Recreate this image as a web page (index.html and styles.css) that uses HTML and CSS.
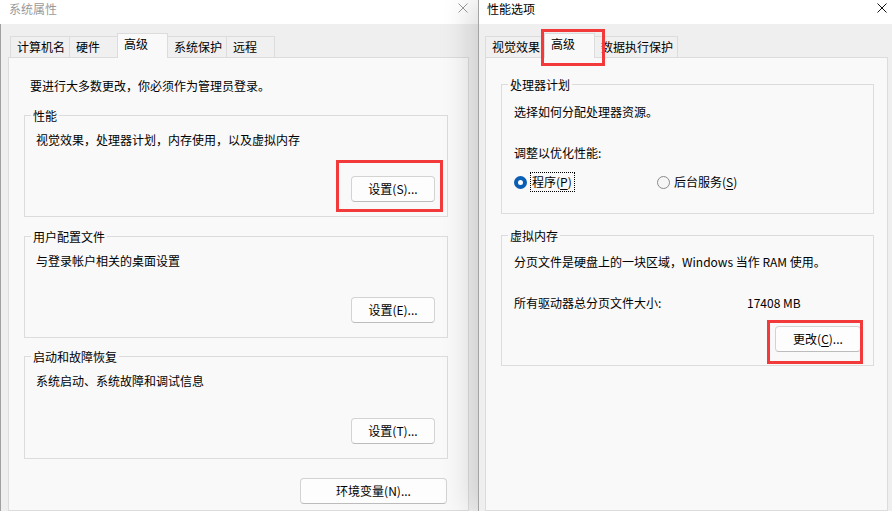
FILE: index.html
```html
<!DOCTYPE html>
<html lang="zh-CN">
<head>
  <meta charset="UTF-8">
  <title>系统属性 - 性能选项</title>
  <link rel="stylesheet" href="styles.css">
</head>
<body>
  <div class="desk">

    <!-- 系统属性 (inactive, behind) -->
    <div class="win win-back">
      <div class="titlebar">
        <span class="title">系统属性</span>
        <svg class="close" width="10" height="10" viewBox="0 0 10 10">
          <path d="M0.5 0.5 L9.5 9.5 M9.5 0.5 L0.5 9.5" stroke="currentColor" stroke-width="1" fill="none"/>
        </svg>
      </div>
      <div class="win-body">
        <div class="tabs">
          <div class="tab">计算机名</div>
          <div class="tab">硬件</div>
          <div class="tab active">高级</div>
          <div class="tab">系统保护</div>
          <div class="tab">远程</div>
        </div>
        <div class="panel">
          <p class="note">要进行大多数更改，你必须作为管理员登录。</p>

          <div class="group">
            <span class="group-title">性能</span>
            <p class="group-text">视觉效果，处理器计划，内存使用，以及虚拟内存</p>
            <button class="btn mark mark-perf">设置(S)...</button>
          </div>

          <div class="group group-profile">
            <span class="group-title">用户配置文件</span>
            <p class="group-text">与登录帐户相关的桌面设置</p>
            <button class="btn">设置(E)...</button>
          </div>

          <div class="group group-startup">
            <span class="group-title">启动和故障恢复</span>
            <p class="group-text">系统启动、系统故障和调试信息</p>
            <button class="btn">设置(T)...</button>
          </div>

          <button class="btn btn-env">环境变量(N)...</button>
        </div>
      </div>
    </div>

    <!-- 性能选项 (active, front) -->
    <div class="win win-front">
      <div class="titlebar">
        <span class="title">性能选项</span>
        <svg class="close" width="10" height="10" viewBox="0 0 10 10">
          <path d="M0.5 0.5 L9.5 9.5 M9.5 0.5 L0.5 9.5" stroke="currentColor" stroke-width="1" fill="none"/>
        </svg>
      </div>
      <div class="win-body">
        <div class="tabs">
          <div class="tab">视觉效果</div>
          <div class="tab active mark mark-tab">高级</div>
          <div class="tab">数据执行保护</div>
        </div>
        <div class="panel">
          <div class="group group-cpu">
            <span class="group-title">处理器计划</span>
            <p class="cpu-text">选择如何分配处理器资源。</p>
            <p class="cpu-adjust">调整以优化性能:</p>
            <div class="radio-row">
              <div class="opt">
                <span class="radio checked"></span>
                <span class="focus">程序(<u>P</u>)</span>
              </div>
              <div class="opt">
                <span class="radio"></span>
                <span>后台服务(<u>S</u>)</span>
              </div>
            </div>
          </div>

          <div class="group group-vm">
            <span class="group-title">虚拟内存</span>
            <p class="vm-text">分页文件是硬盘上的一块区域，Windows 当作 RAM 使用。</p>
            <div class="size-row">
              <span class="size-label">所有驱动器总分页文件大小:</span>
              <span>17408 MB</span>
            </div>
            <button class="btn btn-change mark mark-change">更改(<u>C</u>)...</button>
          </div>
        </div>
      </div>
    </div>

  </div>
</body>
</html>
```

FILE: styles.css
```css
*,
*::before,
*::after {
  box-sizing: border-box;
}

html, body {
  margin: 0;
  padding: 0;
  overflow: hidden;
}

body {
  font-family: "Noto Sans CJK SC", "Liberation Sans", sans-serif;
  font-size: 12px;
  line-height: 16px;
  color: #000;
  background-color: #efefef;
}

p {
  margin: 0;
}

.desk {
  display: flex;
  width: 892px;
  height: 511px;
}

.win {
  display: flex;
  flex-direction: column;
  background-color: #efefef;
}

.win-back {
  width: 478px;
}

.win-front {
  width: 414px;
  position: relative;
  z-index: 1;
  border-left: 1px solid #a3a3a3;
  box-shadow: -10px 0 26px rgba(0, 0, 0, 0.13);
}

/* title bar */
.titlebar {
  height: 24px;
  background-color: #fff;
  display: flex;
  justify-content: space-between;
  align-items: flex-start;
  padding: 1px 10px 0 9px;
}

.win-front .titlebar {
  padding: 1px 5px 0 8px;
}

.title {
  line-height: 16px;
}

.win-back .title,
.win-back .close {
  color: #9a9a9a;
}

.close {
  margin-top: 2px;
  color: #111;
}

.win-body {
  flex: 1;
  display: flex;
  flex-direction: column;
  padding: 9px 9px 0 7px;
}

.win-back .win-body {
  border-left: 1px solid #a0a0a0;
}

.win-front .win-body {
  padding: 9px 4px 0 6px;
}

/* tabs */
.tabs {
  display: flex;
  align-items: flex-end;
  height: 24px;
  padding-left: 2px;
}

.win-front .tabs {
  padding-left: 0;
}

.tab {
  height: 21px;
  min-width: 49px;
  padding: 0 4px 0 6px;
  line-height: 20px;
  border: 1px solid #dcdcdc;
  border-bottom: none;
  margin-right: -1px;
  background-color: #f0f0f0;
  white-space: nowrap;
}

.tab.active {
  height: 25px;
  min-width: 51px;
  margin-bottom: -1px;
  padding-top: 0;
  line-height: 20px;
  background-color: #f9f9f9;
  position: relative;
  z-index: 2;
}

.panel {
  flex: 1;
  display: flex;
  flex-direction: column;
  border: 1px solid #dcdcdc;
  background-color: #f9f9f9;
  padding: 20px 20px 0 15px;
}

.win-front .panel {
  padding: 26px 13px 0 15px;
}

.note {
  margin-left: 6px;
}

/* group boxes */
.group {
  display: flex;
  flex-direction: column;
  height: 102px;
  margin-top: 21px;
  border: 1px solid #dcdcdc;
  padding: 0 12px 14px 11px;
}

.group-profile {
  margin-top: 19px;
}

.group-startup {
  margin-top: 18px;
  height: 103px;
}

.group-title {
  align-self: flex-start;
  margin: -8px 0 0 -5px;
  padding: 0 2px;
  line-height: 16px;
  background-color: #f9f9f9;
}

.group-text {
  margin-top: 8px;
}

.btn {
  font-family: inherit;
  font-size: 12px;
  line-height: 16px;
  color: #000;
  width: 84px;
  height: 26px;
  padding: 0;
  margin-top: auto;
  align-self: flex-end;
  background-color: #fdfdfd;
  border: 1px solid #d3d3d3;
  border-bottom-color: #bcbcbc;
  border-radius: 4px;
}

.btn u {
  text-underline-offset: 2px;
}

.btn-env {
  width: 147px;
  margin-top: 19px;
  margin-right: 1px;
}

/* right dialog */
.group-cpu {
  height: 130px;
  margin-top: 0;
  padding: 0 12px 0 12px;
}

.group-cpu .group-title,
.group-vm .group-title {
  margin-left: -6px;
}

.cpu-text {
  margin-top: 11px;
}

.cpu-adjust {
  margin-top: 25px;
}

.radio-row {
  display: flex;
  align-items: center;
  margin-top: 11px;
  height: 20px;
}

.opt {
  display: flex;
  align-items: center;
  gap: 4px;
  width: 143px;
}

.radio {
  width: 13px;
  height: 13px;
  border-radius: 50%;
  border: 1px solid #8a8a8a;
  background-color: #f6f6f6;
}

.radio.checked {
  border: 4px solid #0a5fb5;
  background-color: #fff;
}

.focus {
  margin-left: -1px;
  padding: 1px 2px 1px 1px;
  border: 1px dotted #000;
}

.opt u {
  text-underline-offset: 2px;
}

.group-vm {
  height: 131px;
  margin-top: 21px;
  padding: 0 12px 13px 12px;
}

.vm-text {
  margin-top: 10px;
}

.size-row {
  display: flex;
  margin-top: 25px;
}

.size-label {
  width: 233px;
}

.btn-change {
  width: 86px;
}

/* red highlight frames */
.mark {
  position: relative;
}

.mark::after {
  content: "";
  position: absolute;
  border: 3px solid #f23a3a;
  pointer-events: none;
}

.mark-perf::after {
  top: -17px;
  left: -16px;
  width: 107px;
  height: 52px;
}

.mark-tab::after {
  top: -5px;
  left: -4px;
  width: 64px;
  height: 37px;
}

.mark-change::after {
  top: -7px;
  left: -9px;
  width: 96px;
  height: 44px;
}
```
